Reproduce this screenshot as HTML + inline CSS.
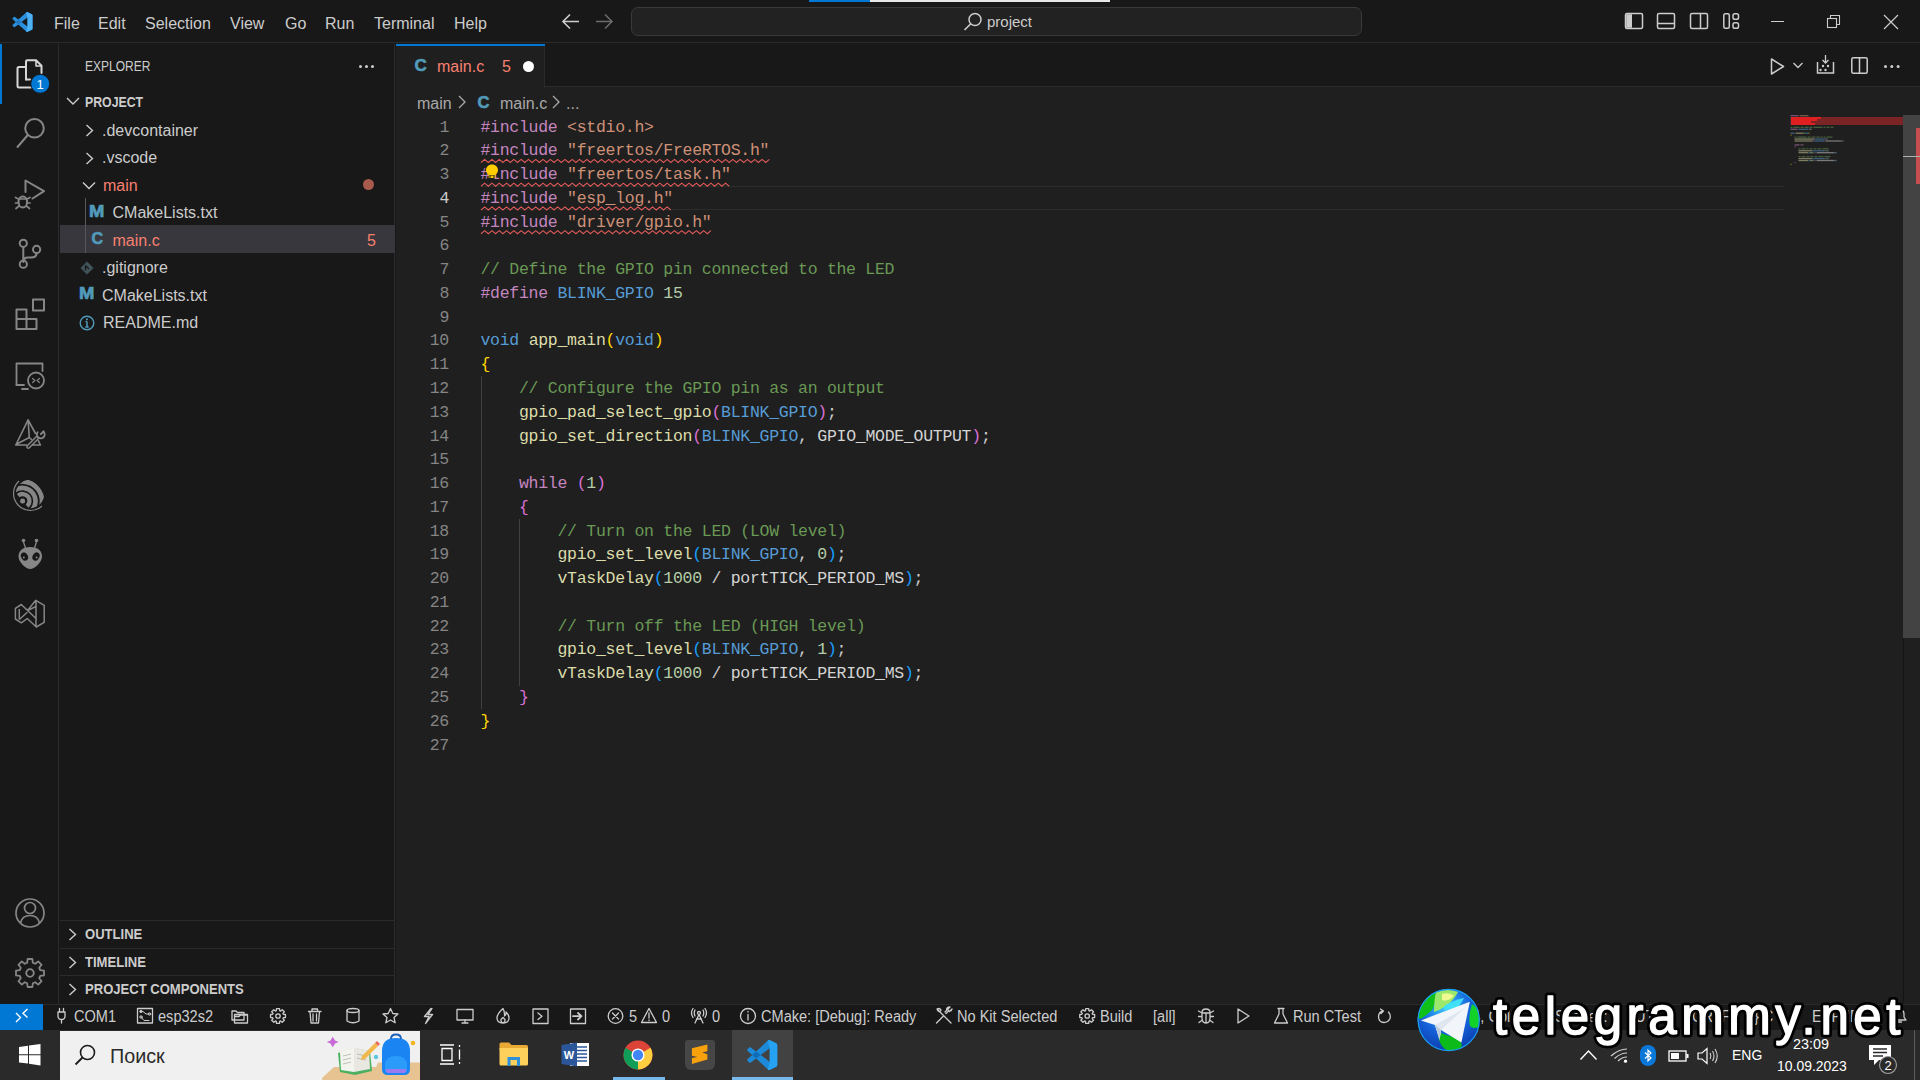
<!DOCTYPE html>
<html><head><meta charset="utf-8">
<style>
*{margin:0;padding:0;box-sizing:border-box}
html,body{width:1920px;height:1080px;overflow:hidden;background:#181818;font-family:"Liberation Sans",sans-serif;color:#cccccc}
.abs{position:absolute}
#title{left:0;top:0;width:1920px;height:43px;background:#181818;border-bottom:1px solid #2b2b2b}
.menu{position:absolute;top:15px;font-size:16px;color:#cccccc}
#act{left:0;top:44px;width:59px;height:960px;background:#181818;border-right:1px solid #2b2b2b}
#side{left:60px;top:44px;width:335px;height:960px;background:#181818;border-right:1px solid #2b2b2b}
#tabs{left:396px;top:44px;width:1524px;height:43px;background:#181818;border-bottom:1px solid #2b2b2b}
#editor{left:396px;top:87px;width:1524px;height:917px;background:#1f1f1f}
#status{left:0;top:1004px;width:1920px;height:26px;background:#181818;border-top:1px solid #2b2b2b}
#taskbar{left:0;top:1030px;width:1920px;height:50px;background:#2a2a2a}
.code{position:absolute;left:480.5px;top:115.6px;font-family:"Liberation Mono",monospace;font-size:16.5px;letter-spacing:-0.28px;white-space:pre;line-height:23.77px;color:#cccccc}
.ln{position:absolute;left:400px;top:115.6px;width:49px;white-space:pre;text-align:right;font-family:"Liberation Mono",monospace;font-size:16.5px;letter-spacing:-0.28px;line-height:23.77px;color:#858585}
.kw{color:#c586c0}.sg{color:#ce9178}.cm{color:#6a9955}.bl{color:#569cd6}.nu{color:#b5cea8}.fn{color:#dcdcaa}
.b1{color:#ffd700}.b2{color:#da70d6}.b3{color:#179fff}.wt{color:#d4d4d4}
.row{position:absolute;left:0;width:400px;height:27.5px}
.row span{position:absolute;top:5.5px;font-size:16px;color:#cccccc;white-space:nowrap}
.row span.ic{top:4px}
.sec{position:absolute;left:0;width:400px;height:27px}
.sec span{position:absolute;top:5px;font-size:14.5px;font-weight:bold;color:#cccccc;white-space:nowrap;transform:scaleX(0.9);transform-origin:0 0}
.st{position:absolute;top:1008px;font-size:16px;color:#cccccc;white-space:nowrap;transform:scaleX(0.91);transform-origin:0 0}
</style></head><body>
<div id="title" class="abs"></div>
<div id="act" class="abs"></div>
<div id="side" class="abs"></div>
<div id="prog1" class="abs" style="left:809px;top:0;width:61px;height:1.5px;background:#0078d4"></div>
<div id="prog2" class="abs" style="left:870px;top:0;width:240px;height:1.5px;background:#e8e8e8"></div>
<svg class="abs" style="left:11.5px;top:11.5px" width="21" height="20" viewBox="0 0 100 100"><path d="M96.46 10.8 L75.86 0.87 C73.48 -0.28 70.63 0.2 68.76 2.07 L29.35 38.04 L12.19 25.01 C10.59 23.8 8.36 23.9 6.88 25.25 L1.37 30.26 C-0.45 31.92 -0.45 34.78 1.36 36.43 L16.25 50 L1.36 63.58 C-0.45 65.23 -0.45 68.09 1.37 69.75 L6.88 74.76 C8.36 76.1 10.59 76.2 12.19 74.99 L29.35 61.96 L68.76 97.93 C70.63 99.8 73.48 100.28 75.86 99.13 L96.46 89.21 C98.62 88.17 100 85.98 100 83.58 V16.42 C100 14.02 98.62 11.83 96.46 10.8 Z M75.01 72.7 L45.1 50 L75.01 27.3 Z" fill="#2a8fdc" fill-rule="evenodd"/><path d="M96.46 10.8 L75.86 0.87 C73.48 -0.28 70.63 0.2 68.76 2.07 L75.01 27.3 V72.7 L68.76 97.93 C70.63 99.8 73.48 100.28 75.86 99.13 L96.46 89.21 C98.62 88.17 100 85.98 100 83.58 V16.42 C100 14.02 98.62 11.83 96.46 10.8 Z" fill="#4cb1f5"/><path d="M29.35 38.04 L45.1 50 L29.35 61.96 L16.25 50 Z" fill="#1f78c0"/></svg>
<div class="menu" style="left:54px">File</div>
<div class="menu" style="left:98px">Edit</div>
<div class="menu" style="left:145px">Selection</div>
<div class="menu" style="left:230px">View</div>
<div class="menu" style="left:285px">Go</div>
<div class="menu" style="left:325px">Run</div>
<div class="menu" style="left:374px">Terminal</div>
<div class="menu" style="left:454px">Help</div>
<svg class="abs" style="left:561px;top:13px" width="20" height="17" viewBox="0 0 20 17"><path d="M2 8.5 H18 M9 1.5 L2 8.5 L9 15.5" stroke="#cccccc" stroke-width="1.6" fill="none"/></svg>
<svg class="abs" style="left:594px;top:13px" width="20" height="17" viewBox="0 0 20 17"><path d="M2 8.5 H18 M11 1.5 L18 8.5 L11 15.5" stroke="#6b6b6b" stroke-width="1.6" fill="none"/></svg>
<div class="abs" style="left:631px;top:7px;width:731px;height:29px;border:1px solid #3a3a3a;border-radius:7px;background:#222222"></div>
<svg class="abs" style="left:963px;top:12px" width="20" height="20" viewBox="0 0 20 20"><circle cx="12" cy="7.5" r="6" stroke="#cccccc" stroke-width="1.5" fill="none"/><path d="M7.8 11.7 L1.5 18" stroke="#cccccc" stroke-width="1.6"/></svg>
<div class="abs" style="left:987px;top:13px;font-size:15px;color:#cccccc">project</div>
<!-- layout icons -->
<svg class="abs" style="left:1624px;top:11px" width="20" height="20" viewBox="0 0 20 20"><rect x="1.5" y="2.5" width="17" height="15" rx="1.5" stroke="#cccccc" stroke-width="1.5" fill="none"/><path d="M2.2 3.2 H8 V16.8 H2.2 Z" fill="#cccccc"/></svg>
<svg class="abs" style="left:1656px;top:11px" width="20" height="20" viewBox="0 0 20 20"><rect x="1.5" y="2.5" width="17" height="15" rx="1.5" stroke="#cccccc" stroke-width="1.5" fill="none"/><path d="M2 12.5 H18" stroke="#cccccc" stroke-width="1.5"/></svg>
<svg class="abs" style="left:1689px;top:11px" width="20" height="20" viewBox="0 0 20 20"><rect x="1.5" y="2.5" width="17" height="15" rx="1.5" stroke="#cccccc" stroke-width="1.5" fill="none"/><path d="M11.5 3 V17" stroke="#cccccc" stroke-width="1.5"/></svg>
<svg class="abs" style="left:1722px;top:11px" width="20" height="20" viewBox="0 0 20 20"><rect x="1.8" y="2.8" width="5.5" height="14.5" rx="1.5" stroke="#cccccc" stroke-width="1.5" fill="none"/><rect x="11" y="2.8" width="5.5" height="5.5" rx="1.8" stroke="#cccccc" stroke-width="1.5" fill="none"/><rect x="11" y="11.8" width="5.5" height="5.5" rx="1.8" stroke="#cccccc" stroke-width="1.5" fill="none"/></svg>
<!-- window controls -->
<div class="abs" style="left:1771px;top:21px;width:13px;height:1px;background:#cccccc"></div>
<svg class="abs" style="left:1826px;top:14px" width="15" height="15" viewBox="0 0 15 15"><rect x="1.5" y="4.5" width="9" height="9" stroke="#cccccc" stroke-width="1.1" fill="none"/><path d="M4.5 4.5 V1.5 H13.5 V10.5 H10.5" stroke="#cccccc" stroke-width="1.1" fill="none"/></svg>
<svg class="abs" style="left:1883px;top:14px" width="16" height="16" viewBox="0 0 16 16"><path d="M1 1 L15 15 M15 1 L1 15" stroke="#cccccc" stroke-width="1.2"/></svg>
<div class="abs" style="left:0;top:44px;width:2px;height:60px;background:#0078d4"></div>
<svg class="abs" style="left:0;top:0" width="60" height="1004" viewBox="0 0 60 1004">
<g fill="none" stroke="#868686" stroke-width="2" stroke-linejoin="round" stroke-linecap="round">
<!-- explorer -->
<path d="M25.5 67 H19 Q17.5 67 17.5 68.5 V86 Q17.5 87.5 19 87.5 H31" stroke="#d7d7d7"/>
<path d="M26 79.5 V61.5 Q26 60.3 27.3 60.3 H36 L41.5 65.8 V73" stroke="#d7d7d7"/>
<path d="M36 60.5 V66 H41.3" stroke="#d7d7d7" stroke-width="1.6"/>
<path d="M26 79.5 H30" stroke="#d7d7d7"/>
<!-- search -->
<circle cx="34.5" cy="128.3" r="9.3"/>
<path d="M27.8 135 L17.5 147"/>
<!-- debug -->
<path d="M25.5 192 V180.5 L44 191.2 L32.5 198.5"/>
<ellipse cx="22.8" cy="202" rx="4.3" ry="5.5"/>
<path d="M18.5 199 H27 M15.5 197.5 L18.5 199 M30 197.5 L27 199 M15.5 203 H18.5 M27 203 H30 M16 208.5 L19 206 M29.5 208.5 L26.5 206" stroke-width="1.7"/>
<!-- git -->
<circle cx="23.3" cy="243.3" r="3.6"/>
<circle cx="36.6" cy="249.4" r="3.6"/>
<circle cx="23.3" cy="264.2" r="3.6"/>
<path d="M23.3 247 V260.6 M36.6 253 Q36.6 257.5 31 257.5 H28 Q23.3 257.5 23.3 262"/>
<!-- extensions -->
<path d="M16.5 309.5 H26.5 V329 H16.5 Z M16.5 319 H36.5 V329 H26.5 M33 299.5 H44 V310.5 H33 Z"/>
<!-- remote -->
<path d="M16.5 385 V363.5 H42.5 V371" stroke-width="1.8"/>
<path d="M16.5 385 H24 M22 389 H28" stroke-width="1.8"/>
<circle cx="36" cy="380.5" r="8" stroke-width="1.8"/>
<path d="M32.5 378.5 L35 380.5 L32.5 382.5 M39.5 378.5 L37 380.5 L39.5 382.5" stroke-width="1.2"/>
<!-- cmake -->
<path d="M28.1 419.8 L15.8 445 H26.5 M28.1 419.8 L35.5 433.5 M38.3 440.5 L40.4 445 H31.5 M28.1 419.8 L29.3 437.5 M16.8 444 L29.3 437.5 L31.5 439.5" stroke-width="1.6"/>
<path d="M37 438 L28.3 446.7" stroke-width="4.4"/>
<path d="M37 438 L28.3 446.7" stroke="#181818" stroke-width="1.4"/>
<path d="M43.3 431.5 A3.9 3.9 0 1 1 37.6 432.2" stroke-width="1.9"/>
<path d="M40.8 434.2 L43.5 431.5" stroke-width="1.9"/>
</g>
<!-- esp -->
<defs><clipPath id="espc"><circle cx="30" cy="494" r="14.2"/></clipPath></defs>
<g clip-path="url(#espc)" fill="none" stroke="#868686"><path d="M18.16 495.61 A6.9 6.9 0 0 1 27.04 506.19" stroke-width="4.3"/><path d="M14.12 490.79 A13.2 13.2 0 0 1 31.08 511.01" stroke-width="4.6"/><path d="M10.00 485.89 A19.6 19.6 0 0 1 35.20 515.91" stroke-width="4.6"/></g><circle cx="22.6" cy="500.9" r="2.5" fill="#868686"/><path d="M19 481 A15.2 15.2 0 0 0 42 506" fill="none" stroke="#868686" stroke-width="1.2"/>
<g fill="#868686">
<!-- platformio -->
<path d="M30.2 547 C38 547 42 551 42 556.5 C42 562 35 569 30.2 569 C25.5 569 18.5 562 18.5 556.5 C18.5 551 22.5 547 30.2 547 Z"/>
<circle cx="23.5" cy="540.5" r="1.8"/><circle cx="36.5" cy="540.5" r="1.8"/>
<path d="M23.2 541 L25.5 548 M36.8 541 L34.5 548" stroke="#868686" stroke-width="1.3"/>
<ellipse cx="24.5" cy="556.5" rx="3.3" ry="4.3" fill="#181818" transform="rotate(-30 24.5 556.5)"/>
<ellipse cx="36" cy="556.5" rx="3.3" ry="4.3" fill="#181818" transform="rotate(30 36 556.5)"/>
<circle cx="23.8" cy="557.5" r="1" fill="#868686"/><circle cx="36.6" cy="557.5" r="1" fill="#868686"/>
</g>
<g fill="none" stroke="#868686" stroke-width="1.7" stroke-linejoin="round">
<!-- vs -->
<path d="M15.4 608.3 L21.3 604.5 L27.5 610.5 L35.8 600.3 L44.2 605.3 V622.4 L36.3 627 L27.3 618.5 L21.3 622.8 L15.4 619 Z M36 600.5 V627 M21.3 604.5 L36 618.5 M19.3 609 V619.5 M19.3 619.5 L27.3 612.3 M27.5 610.5 L36 606.5" stroke-width="1.5"/>
<!-- account -->
<circle cx="30" cy="913" r="14"/>
<circle cx="30" cy="908" r="5.5"/>
<path d="M20.5 923 Q22 915.5 30 915.5 Q38 915.5 39.5 923"/>
</g>
<!-- settings gear -->
<g transform="translate(30 973)" fill="none" stroke="#868686" stroke-width="1.8" stroke-linejoin="round"><path d="M-2.83 -10.22 L-2.40 -14.00 L2.40 -14.00 L2.83 -10.22 L5.22 -9.22 L8.20 -11.59 L11.59 -8.20 L9.22 -5.22 L10.22 -2.83 L14.00 -2.40 L14.00 2.40 L10.22 2.83 L9.22 5.22 L11.59 8.20 L8.20 11.59 L5.22 9.22 L2.83 10.22 L2.40 14.00 L-2.40 14.00 L-2.83 10.22 L-5.22 9.22 L-8.20 11.59 L-11.59 8.20 L-9.22 5.22 L-10.22 2.83 L-14.00 2.40 L-14.00 -2.40 L-10.22 -2.83 L-9.22 -5.22 L-11.59 -8.20 L-8.20 -11.59 L-5.22 -9.22 Z"/><circle cx="0" cy="0" r="3.8"/></g>
<!-- badge -->
<circle cx="40.2" cy="83.8" r="9.5" fill="#0078d4" stroke="#181818" stroke-width="1"/>
<text x="40.2" y="89" text-anchor="middle" font-family="Liberation Sans" font-size="13" fill="#ffffff">1</text>
</svg>

<div class="abs" style="left:85px;top:57px;font-size:15px;color:#cccccc;transform:scaleX(0.8);transform-origin:0 0">EXPLORER</div>
<div class="abs" style="left:359px;top:65px;width:3px;height:3px;background:#cccccc;border-radius:50%;box-shadow:6px 0 #cccccc,12px 0 #cccccc"></div>
<svg class="abs" style="left:66px;top:96px" width="14" height="10" viewBox="0 0 14 10"><path d="M1 2 L7 8 L13 2" stroke="#cccccc" stroke-width="1.4" fill="none"/></svg>
<div class="abs" style="left:85px;top:93px;font-size:15px;font-weight:bold;color:#cccccc;transform:scaleX(0.82);transform-origin:0 0">PROJECT</div>
<div class="abs" style="left:60px;top:225px;width:335px;height:28px;background:#37373d"></div>
<div class="abs" style="left:85px;top:198px;width:1px;height:55px;background:#585858"></div>
<div class="row" style="top:116px"><svg class="abs" style="left:85px;top:8px" width="9" height="13" viewBox="0 0 9 13"><path d="M1.5 1 L7.5 6.5 L1.5 12" stroke="#cccccc" stroke-width="1.4" fill="none"/></svg><span style="left:102px">.devcontainer</span></div>
<div class="row" style="top:143.5px"><svg class="abs" style="left:85px;top:8px" width="9" height="13" viewBox="0 0 9 13"><path d="M1.5 1 L7.5 6.5 L1.5 12" stroke="#cccccc" stroke-width="1.4" fill="none"/></svg><span style="left:102px">.vscode</span></div>
<div class="row" style="top:171px"><svg class="abs" style="left:82px;top:10px" width="14" height="9" viewBox="0 0 14 9"><path d="M1 1.5 L7 7.5 L13 1.5" stroke="#cccccc" stroke-width="1.4" fill="none"/></svg><span style="left:103px;color:#f88070">main</span><div class="abs" style="left:363px;top:8px;width:11px;height:11px;border-radius:50%;background:#a85a4c"></div></div>
<div class="row" style="top:198.5px"><span class="ic" style="left:89px;color:#519aba;font-weight:bold;font-size:16px;top:4px;transform:scaleX(1.15);transform-origin:0 0;-webkit-text-stroke:0.7px #519aba">M</span><span style="left:112.5px">CMakeLists.txt</span></div>
<div class="row" style="top:226px"><span class="ic" style="left:91.5px;color:#519aba;font-weight:bold;font-size:16px;top:4px;-webkit-text-stroke:0.6px #519aba">C</span><span style="left:112.5px;color:#f88070">main.c</span><span style="left:367px;color:#f88070">5</span></div>
<div class="row" style="top:253.5px"><svg class="abs" style="left:80px;top:7px" width="14" height="14" viewBox="0 0 14 14"><path d="M7 0.5 L13.5 7 L7 13.5 L0.5 7 Z" fill="#41535b"/><path d="M5.5 4.5 L9 8 M5.5 4.5 V9.5 M9 8" stroke="#181818" stroke-width="1.2"/></svg><span style="left:102px">.gitignore</span></div>
<div class="row" style="top:281px"><span class="ic" style="left:79px;color:#519aba;font-weight:bold;font-size:16px;top:4px;transform:scaleX(1.15);transform-origin:0 0;-webkit-text-stroke:0.7px #519aba">M</span><span style="left:102px">CMakeLists.txt</span></div>
<div class="row" style="top:308.5px"><svg class="abs" style="left:79px;top:6px" width="16" height="16" viewBox="0 0 16 16"><circle cx="8" cy="8" r="6.8" stroke="#519aba" stroke-width="1.4" fill="none"/><path d="M8 6.5 V12 M6.3 12 H9.7 M6.5 6.5 H8" stroke="#519aba" stroke-width="1.5"/><circle cx="8" cy="4.3" r="1" fill="#519aba"/></svg><span style="left:103px">README.md</span></div>
<!-- bottom panels -->
<div class="abs" style="left:60px;top:920px;width:335px;height:1px;background:#2b2b2b"></div>
<div class="abs" style="left:60px;top:948px;width:335px;height:1px;background:#2b2b2b"></div>
<div class="abs" style="left:60px;top:975px;width:335px;height:1px;background:#2b2b2b"></div>
<div class="sec" style="top:921px"><svg class="abs" style="left:68px;top:7px" width="9" height="13" viewBox="0 0 9 13"><path d="M1.5 1 L7.5 6.5 L1.5 12" stroke="#cccccc" stroke-width="1.4" fill="none"/></svg><span style="left:85px">OUTLINE</span></div>
<div class="sec" style="top:949px"><svg class="abs" style="left:68px;top:7px" width="9" height="13" viewBox="0 0 9 13"><path d="M1.5 1 L7.5 6.5 L1.5 12" stroke="#cccccc" stroke-width="1.4" fill="none"/></svg><span style="left:85px">TIMELINE</span></div>
<div class="sec" style="top:976px"><svg class="abs" style="left:68px;top:7px" width="9" height="13" viewBox="0 0 9 13"><path d="M1.5 1 L7.5 6.5 L1.5 12" stroke="#cccccc" stroke-width="1.4" fill="none"/></svg><span style="left:85px">PROJECT COMPONENTS</span></div>
<div id="tabs" class="abs"></div>
<div id="editor" class="abs"></div>
<div class="abs" style="left:396px;top:44px;width:149px;height:44px;background:#1f1f1f;border-right:1px solid #2b2b2b"></div>
<div class="abs" style="left:396px;top:44px;width:149px;height:1.5px;background:#0078d4"></div>
<div class="abs" style="left:414.5px;top:56px;font-size:17px;font-weight:bold;color:#519aba;-webkit-text-stroke:0.6px #519aba">C</div>
<div class="abs" style="left:437px;top:58px;font-size:16px;color:#f88070">main.c</div>
<div class="abs" style="left:502px;top:58px;font-size:16px;color:#f88070">5</div>
<div class="abs" style="left:522.5px;top:60.8px;width:11px;height:11px;border-radius:50%;background:#ffffff"></div>
<!-- breadcrumbs -->
<div class="abs" style="left:417px;top:94.5px;font-size:16px;color:#a9a9a9">main</div>
<svg class="abs" style="left:457px;top:95px" width="10" height="14" viewBox="0 0 10 14"><path d="M2 1 L8 7 L2 13" stroke="#a9a9a9" stroke-width="1.3" fill="none"/></svg>
<div class="abs" style="left:477.5px;top:92.5px;font-size:16.5px;font-weight:bold;color:#519aba;-webkit-text-stroke:0.6px #519aba">C</div>
<div class="abs" style="left:500px;top:94.5px;font-size:16px;color:#a9a9a9">main.c</div>
<svg class="abs" style="left:551px;top:95px" width="10" height="14" viewBox="0 0 10 14"><path d="M2 1 L8 7 L2 13" stroke="#a9a9a9" stroke-width="1.3" fill="none"/></svg>
<div class="abs" style="left:566px;top:94.5px;font-size:16px;color:#a9a9a9">...</div>
<!-- editor actions -->
<svg class="abs" style="left:1770px;top:57px" width="16" height="19" viewBox="0 0 16 19"><path d="M1.5 2 L13.5 9.5 L1.5 17 Z" stroke="#cccccc" stroke-width="1.5" fill="none" stroke-linejoin="round"/></svg>
<svg class="abs" style="left:1792px;top:61px" width="12" height="9" viewBox="0 0 12 9"><path d="M1.5 2 L6 6.5 L10.5 2" stroke="#cccccc" stroke-width="1.3" fill="none"/></svg>
<svg class="abs" style="left:1816px;top:54px" width="19" height="21" viewBox="0 0 19 21"><path d="M1.5 8 V19 H17.5 V8" stroke="#cccccc" stroke-width="1.5" fill="none"/><path d="M9.5 1 V9 M6.5 6 L9.5 9 L12.5 6" stroke="#cccccc" stroke-width="1.3" fill="none"/><circle cx="7" cy="12" r="1.2" fill="#cccccc"/><circle cx="12" cy="12" r="1.2" fill="#cccccc"/><circle cx="4.5" cy="16" r="1.2" fill="#cccccc"/><circle cx="9.5" cy="16" r="1.2" fill="#cccccc"/></svg>
<svg class="abs" style="left:1850px;top:56px" width="19" height="19" viewBox="0 0 19 19"><rect x="1.8" y="1.8" width="15.4" height="15.4" rx="1.5" stroke="#cccccc" stroke-width="1.5" fill="none"/><path d="M9.5 2 V17" stroke="#cccccc" stroke-width="1.5"/></svg>
<div class="abs" style="left:1883.5px;top:64.5px;width:3px;height:3px;background:#cccccc;border-radius:50%;box-shadow:6.3px 0 #cccccc,12.6px 0 #cccccc"></div>
<!-- current line -->
<div class="abs" style="left:481px;top:186px;width:1303px;height:24px;border-top:1px solid #2c2c2c;border-bottom:1px solid #2c2c2c"></div>
<!-- indent guides -->
<div class="abs" style="left:481px;top:376px;width:1px;height:333px;background:#404040"></div>
<div class="abs" style="left:519px;top:519px;width:1px;height:167px;background:#404040"></div>
<!-- squiggles -->
<svg class="abs" style="left:0;top:0" width="1920" height="1004"><path d="M481.00 162.47 L484.65 159.37 L488.30 162.47 L491.95 159.37 L495.60 162.47 L499.25 159.37 L502.90 162.47 L506.55 159.37 L510.20 162.47 L513.85 159.37 L517.50 162.47 L521.15 159.37 L524.80 162.47 L528.45 159.37 L532.10 162.47 L535.75 159.37 L539.40 162.47 L543.05 159.37 L546.70 162.47 L550.35 159.37 L554.00 162.47 L557.65 159.37 L561.30 162.47 L564.95 159.37 L568.60 162.47 L572.25 159.37 L575.90 162.47 L579.55 159.37 L583.20 162.47 L586.85 159.37 L590.50 162.47 L594.15 159.37 L597.80 162.47 L601.45 159.37 L605.10 162.47 L608.75 159.37 L612.40 162.47 L616.05 159.37 L619.70 162.47 L623.35 159.37 L627.00 162.47 L630.65 159.37 L634.30 162.47 L637.95 159.37 L641.60 162.47 L645.25 159.37 L648.90 162.47 L652.55 159.37 L656.20 162.47 L659.85 159.37 L663.50 162.47 L667.15 159.37 L670.80 162.47 L674.45 159.37 L678.10 162.47 L681.75 159.37 L685.40 162.47 L689.05 159.37 L692.70 162.47 L696.35 159.37 L700.00 162.47 L703.65 159.37 L707.30 162.47 L710.95 159.37 L714.60 162.47 L718.25 159.37 L721.90 162.47 L725.55 159.37 L729.20 162.47 L732.85 159.37 L736.50 162.47 L740.15 159.37 L743.80 162.47 L747.45 159.37 L751.10 162.47 L754.75 159.37 L758.40 162.47 L762.05 159.37 L765.70 162.47 L769.35 159.37 M481.00 186.24 L484.65 183.14 L488.30 186.24 L491.95 183.14 L495.60 186.24 L499.25 183.14 L502.90 186.24 L506.55 183.14 L510.20 186.24 L513.85 183.14 L517.50 186.24 L521.15 183.14 L524.80 186.24 L528.45 183.14 L532.10 186.24 L535.75 183.14 L539.40 186.24 L543.05 183.14 L546.70 186.24 L550.35 183.14 L554.00 186.24 L557.65 183.14 L561.30 186.24 L564.95 183.14 L568.60 186.24 L572.25 183.14 L575.90 186.24 L579.55 183.14 L583.20 186.24 L586.85 183.14 L590.50 186.24 L594.15 183.14 L597.80 186.24 L601.45 183.14 L605.10 186.24 L608.75 183.14 L612.40 186.24 L616.05 183.14 L619.70 186.24 L623.35 183.14 L627.00 186.24 L630.65 183.14 L634.30 186.24 L637.95 183.14 L641.60 186.24 L645.25 183.14 L648.90 186.24 L652.55 183.14 L656.20 186.24 L659.85 183.14 L663.50 186.24 L667.15 183.14 L670.80 186.24 L674.45 183.14 L678.10 186.24 L681.75 183.14 L685.40 186.24 L689.05 183.14 L692.70 186.24 L696.35 183.14 L700.00 186.24 L703.65 183.14 L707.30 186.24 L710.95 183.14 L714.60 186.24 L718.25 183.14 L721.90 186.24 L725.55 183.14 L729.20 186.24 M481.00 210.01 L484.65 206.91 L488.30 210.01 L491.95 206.91 L495.60 210.01 L499.25 206.91 L502.90 210.01 L506.55 206.91 L510.20 210.01 L513.85 206.91 L517.50 210.01 L521.15 206.91 L524.80 210.01 L528.45 206.91 L532.10 210.01 L535.75 206.91 L539.40 210.01 L543.05 206.91 L546.70 210.01 L550.35 206.91 L554.00 210.01 L557.65 206.91 L561.30 210.01 L564.95 206.91 L568.60 210.01 L572.25 206.91 L575.90 210.01 L579.55 206.91 L583.20 210.01 L586.85 206.91 L590.50 210.01 L594.15 206.91 L597.80 210.01 L601.45 206.91 L605.10 210.01 L608.75 206.91 L612.40 210.01 L616.05 206.91 L619.70 210.01 L623.35 206.91 L627.00 210.01 L630.65 206.91 L634.30 210.01 L637.95 206.91 L641.60 210.01 L645.25 206.91 L648.90 210.01 L652.55 206.91 L656.20 210.01 L659.85 206.91 L663.50 210.01 L667.15 206.91 L670.80 210.01 M481.00 233.78 L484.65 230.68 L488.30 233.78 L491.95 230.68 L495.60 233.78 L499.25 230.68 L502.90 233.78 L506.55 230.68 L510.20 233.78 L513.85 230.68 L517.50 233.78 L521.15 230.68 L524.80 233.78 L528.45 230.68 L532.10 233.78 L535.75 230.68 L539.40 233.78 L543.05 230.68 L546.70 233.78 L550.35 230.68 L554.00 233.78 L557.65 230.68 L561.30 233.78 L564.95 230.68 L568.60 233.78 L572.25 230.68 L575.90 233.78 L579.55 230.68 L583.20 233.78 L586.85 230.68 L590.50 233.78 L594.15 230.68 L597.80 233.78 L601.45 230.68 L605.10 233.78 L608.75 230.68 L612.40 233.78 L616.05 230.68 L619.70 233.78 L623.35 230.68 L627.00 233.78 L630.65 230.68 L634.30 233.78 L637.95 230.68 L641.60 233.78 L645.25 230.68 L648.90 233.78 L652.55 230.68 L656.20 233.78 L659.85 230.68 L663.50 233.78 L667.15 230.68 L670.80 233.78 L674.45 230.68 L678.10 233.78 L681.75 230.68 L685.40 233.78 L689.05 230.68 L692.70 233.78 L696.35 230.68 L700.00 233.78 L703.65 230.68 L707.30 233.78 L710.95 230.68" stroke="#e05a5a" stroke-width="1.1" fill="none"/></svg>
<!-- minimap -->
<svg id="minisvg" class="abs" style="left:0;top:0;opacity:0.5" width="1920" height="1004"><rect x="1790.5" y="115.00" width="8" height="1.3" fill="#c586c0"/><rect x="1799.5" y="115.00" width="9" height="1.3" fill="#ce9178"/><rect x="1790.5" y="116.95" width="8" height="1.3" fill="#c586c0"/><rect x="1799.5" y="116.95" width="21" height="1.3" fill="#ce9178"/><rect x="1790.5" y="118.90" width="8" height="1.3" fill="#c586c0"/><rect x="1799.5" y="118.90" width="17" height="1.3" fill="#ce9178"/><rect x="1790.5" y="120.85" width="8" height="1.3" fill="#c586c0"/><rect x="1799.5" y="120.85" width="11" height="1.3" fill="#ce9178"/><rect x="1790.5" y="122.80" width="8" height="1.3" fill="#c586c0"/><rect x="1799.5" y="122.80" width="15" height="1.3" fill="#ce9178"/><rect x="1790.5" y="126.70" width="2" height="1.3" fill="#6a9955"/><rect x="1793.5" y="126.70" width="6" height="1.3" fill="#6a9955"/><rect x="1800.5" y="126.70" width="3" height="1.3" fill="#6a9955"/><rect x="1804.5" y="126.70" width="4" height="1.3" fill="#6a9955"/><rect x="1809.5" y="126.70" width="3" height="1.3" fill="#6a9955"/><rect x="1813.5" y="126.70" width="9" height="1.3" fill="#6a9955"/><rect x="1823.5" y="126.70" width="2" height="1.3" fill="#6a9955"/><rect x="1826.5" y="126.70" width="3" height="1.3" fill="#6a9955"/><rect x="1830.5" y="126.70" width="3" height="1.3" fill="#6a9955"/><rect x="1790.5" y="128.65" width="7" height="1.3" fill="#c586c0"/><rect x="1798.5" y="128.65" width="10" height="1.3" fill="#569cd6"/><rect x="1809.5" y="128.65" width="2" height="1.3" fill="#b5cea8"/><rect x="1790.5" y="132.55" width="4" height="1.3" fill="#569cd6"/><rect x="1795.5" y="132.55" width="8" height="1.3" fill="#dcdcaa"/><rect x="1803.5" y="132.55" width="1" height="1.3" fill="#ffd700"/><rect x="1804.5" y="132.55" width="4" height="1.3" fill="#569cd6"/><rect x="1808.5" y="132.55" width="1" height="1.3" fill="#ffd700"/><rect x="1790.5" y="134.50" width="1" height="1.3" fill="#ffd700"/><rect x="1794.5" y="136.45" width="2" height="1.3" fill="#6a9955"/><rect x="1797.5" y="136.45" width="9" height="1.3" fill="#6a9955"/><rect x="1807.5" y="136.45" width="3" height="1.3" fill="#6a9955"/><rect x="1811.5" y="136.45" width="4" height="1.3" fill="#6a9955"/><rect x="1816.5" y="136.45" width="3" height="1.3" fill="#6a9955"/><rect x="1820.5" y="136.45" width="2" height="1.3" fill="#6a9955"/><rect x="1823.5" y="136.45" width="2" height="1.3" fill="#6a9955"/><rect x="1826.5" y="136.45" width="6" height="1.3" fill="#6a9955"/><rect x="1794.5" y="138.40" width="20" height="1.3" fill="#dcdcaa"/><rect x="1814.5" y="138.40" width="1" height="1.3" fill="#da70d6"/><rect x="1815.5" y="138.40" width="10" height="1.3" fill="#569cd6"/><rect x="1825.5" y="138.40" width="1" height="1.3" fill="#da70d6"/><rect x="1826.5" y="138.40" width="1" height="1.3" fill="#cccccc"/><rect x="1794.5" y="140.35" width="18" height="1.3" fill="#dcdcaa"/><rect x="1812.5" y="140.35" width="1" height="1.3" fill="#da70d6"/><rect x="1813.5" y="140.35" width="10" height="1.3" fill="#569cd6"/><rect x="1823.5" y="140.35" width="1" height="1.3" fill="#cccccc"/><rect x="1825.5" y="140.35" width="16" height="1.3" fill="#d4d4d4"/><rect x="1841.5" y="140.35" width="1" height="1.3" fill="#da70d6"/><rect x="1842.5" y="140.35" width="1" height="1.3" fill="#cccccc"/><rect x="1794.5" y="144.25" width="5" height="1.3" fill="#c586c0"/><rect x="1800.5" y="144.25" width="1" height="1.3" fill="#da70d6"/><rect x="1801.5" y="144.25" width="1" height="1.3" fill="#b5cea8"/><rect x="1802.5" y="144.25" width="1" height="1.3" fill="#da70d6"/><rect x="1794.5" y="146.20" width="1" height="1.3" fill="#da70d6"/><rect x="1798.5" y="148.15" width="2" height="1.3" fill="#6a9955"/><rect x="1801.5" y="148.15" width="4" height="1.3" fill="#6a9955"/><rect x="1806.5" y="148.15" width="2" height="1.3" fill="#6a9955"/><rect x="1809.5" y="148.15" width="3" height="1.3" fill="#6a9955"/><rect x="1813.5" y="148.15" width="3" height="1.3" fill="#6a9955"/><rect x="1817.5" y="148.15" width="4" height="1.3" fill="#6a9955"/><rect x="1822.5" y="148.15" width="6" height="1.3" fill="#6a9955"/><rect x="1798.5" y="150.10" width="14" height="1.3" fill="#dcdcaa"/><rect x="1812.5" y="150.10" width="1" height="1.3" fill="#179fff"/><rect x="1813.5" y="150.10" width="10" height="1.3" fill="#569cd6"/><rect x="1823.5" y="150.10" width="1" height="1.3" fill="#cccccc"/><rect x="1825.5" y="150.10" width="1" height="1.3" fill="#b5cea8"/><rect x="1826.5" y="150.10" width="1" height="1.3" fill="#179fff"/><rect x="1827.5" y="150.10" width="1" height="1.3" fill="#cccccc"/><rect x="1798.5" y="152.05" width="10" height="1.3" fill="#dcdcaa"/><rect x="1808.5" y="152.05" width="1" height="1.3" fill="#179fff"/><rect x="1809.5" y="152.05" width="4" height="1.3" fill="#b5cea8"/><rect x="1814.5" y="152.05" width="1" height="1.3" fill="#cccccc"/><rect x="1816.5" y="152.05" width="18" height="1.3" fill="#d4d4d4"/><rect x="1834.5" y="152.05" width="1" height="1.3" fill="#179fff"/><rect x="1835.5" y="152.05" width="1" height="1.3" fill="#cccccc"/><rect x="1798.5" y="155.95" width="2" height="1.3" fill="#6a9955"/><rect x="1801.5" y="155.95" width="4" height="1.3" fill="#6a9955"/><rect x="1806.5" y="155.95" width="3" height="1.3" fill="#6a9955"/><rect x="1810.5" y="155.95" width="3" height="1.3" fill="#6a9955"/><rect x="1814.5" y="155.95" width="3" height="1.3" fill="#6a9955"/><rect x="1818.5" y="155.95" width="5" height="1.3" fill="#6a9955"/><rect x="1824.5" y="155.95" width="6" height="1.3" fill="#6a9955"/><rect x="1798.5" y="157.90" width="14" height="1.3" fill="#dcdcaa"/><rect x="1812.5" y="157.90" width="1" height="1.3" fill="#179fff"/><rect x="1813.5" y="157.90" width="10" height="1.3" fill="#569cd6"/><rect x="1823.5" y="157.90" width="1" height="1.3" fill="#cccccc"/><rect x="1825.5" y="157.90" width="1" height="1.3" fill="#b5cea8"/><rect x="1826.5" y="157.90" width="1" height="1.3" fill="#179fff"/><rect x="1827.5" y="157.90" width="1" height="1.3" fill="#cccccc"/><rect x="1798.5" y="159.85" width="10" height="1.3" fill="#dcdcaa"/><rect x="1808.5" y="159.85" width="1" height="1.3" fill="#179fff"/><rect x="1809.5" y="159.85" width="4" height="1.3" fill="#b5cea8"/><rect x="1814.5" y="159.85" width="1" height="1.3" fill="#cccccc"/><rect x="1816.5" y="159.85" width="18" height="1.3" fill="#d4d4d4"/><rect x="1834.5" y="159.85" width="1" height="1.3" fill="#179fff"/><rect x="1835.5" y="159.85" width="1" height="1.3" fill="#cccccc"/><rect x="1794.5" y="161.80" width="1" height="1.3" fill="#da70d6"/><rect x="1790.5" y="163.75" width="1" height="1.3" fill="#ffd700"/></svg>
<div class="abs" style="left:1790.5px;top:116.9px;width:113px;height:7.8px;background:#7a2426"></div>
<div class="abs" style="left:1790.5px;top:116.9px;width:30px;height:2px;background:#e02020"></div>
<div class="abs" style="left:1790.5px;top:118.9px;width:26px;height:2px;background:#e02020"></div>
<div class="abs" style="left:1790.5px;top:120.8px;width:20px;height:2px;background:#e02020"></div>
<div class="abs" style="left:1790.5px;top:122.8px;width:24px;height:2px;background:#e02020"></div>

<div class="abs" style="left:1903px;top:115px;width:17px;height:523px;background:#434343"></div>
<div class="abs" style="left:1903px;top:638px;width:1px;height:366px;background:#141414"></div>
<div class="abs" style="left:1916px;top:128px;width:4px;height:56px;background:#c74e4e"></div>
<div class="abs" style="left:1903px;top:155.5px;width:17px;height:1px;background:#b0b0b0"></div>
<div class="code" id="code"><span class="kw">#include</span> <span class="sg">&lt;stdio.h&gt;</span>
<span class="kw">#include</span> <span class="sg">"freertos/FreeRTOS.h"</span>
<span class="kw">#include</span> <span class="sg">"freertos/task.h"</span>
<span class="kw">#include</span> <span class="sg">"esp_log.h"</span>
<span class="kw">#include</span> <span class="sg">"driver/gpio.h"</span>
 
<span class="cm">// Define the GPIO pin connected to the LED</span>
<span class="kw">#define</span> <span class="bl">BLINK_GPIO</span> <span class="nu">15</span>
 
<span class="bl">void</span> <span class="fn">app_main</span><span class="b1">(</span><span class="bl">void</span><span class="b1">)</span>
<span class="b1">{</span>
    <span class="cm">// Configure the GPIO pin as an output</span>
    <span class="fn">gpio_pad_select_gpio</span><span class="b2">(</span><span class="bl">BLINK_GPIO</span><span class="b2">)</span>;
    <span class="fn">gpio_set_direction</span><span class="b2">(</span><span class="bl">BLINK_GPIO</span>, <span class="wt">GPIO_MODE_OUTPUT</span><span class="b2">)</span>;
 
    <span class="kw">while</span> <span class="b2">(</span><span class="nu">1</span><span class="b2">)</span>
    <span class="b2">{</span>
        <span class="cm">// Turn on the LED (LOW level)</span>
        <span class="fn">gpio_set_level</span><span class="b3">(</span><span class="bl">BLINK_GPIO</span>, <span class="nu">0</span><span class="b3">)</span>;
        <span class="fn">vTaskDelay</span><span class="b3">(</span><span class="nu">1000</span> / <span class="wt">portTICK_PERIOD_MS</span><span class="b3">)</span>;
 
        <span class="cm">// Turn off the LED (HIGH level)</span>
        <span class="fn">gpio_set_level</span><span class="b3">(</span><span class="bl">BLINK_GPIO</span>, <span class="nu">1</span><span class="b3">)</span>;
        <span class="fn">vTaskDelay</span><span class="b3">(</span><span class="nu">1000</span> / <span class="wt">portTICK_PERIOD_MS</span><span class="b3">)</span>;
    <span class="b2">}</span>
<span class="b1">}</span>
 </div>
<!-- lightbulb -->
<svg class="abs" style="left:485px;top:164px" width="14" height="17" viewBox="0 0 14 17"><path d="M7 0.5 C10.6 0.5 13 3 13 6.2 C13 8.5 11.5 9.8 10.3 11 V14 H3.7 V11 C2.5 9.8 1 8.5 1 6.2 C1 3 3.4 0.5 7 0.5 Z" fill="#ffcc00"/><rect x="4.5" y="11" width="5" height="4" fill="#1f1f1f"/><rect x="5.5" y="11.5" width="3" height="2.5" fill="#ffcc00"/></svg>
<div class="ln" id="lnums">1
2
3
<span style="color:#cccccc">4</span>
5
6
7
8
9
10
11
12
13
14
15
16
17
18
19
20
21
22
23
24
25
26
27</div>
<div id="status" class="abs"></div>
<div class="abs" style="left:0;top:1004px;width:43px;height:26px;background:#0078d4"></div>
<svg class="abs" style="left:0;top:1004px" width="43" height="26" viewBox="0 1004 43 26"><path d="M16 1013 L20.5 1017.5 L16 1022 M27.5 1009 L23 1013.3 L27.5 1017.5" stroke="#ffffff" stroke-width="1.4" fill="none"/></svg>
<div class="st" style="left:74px">COM1</div>
<div class="st" style="left:157.5px">esp32s2</div>
<div class="st" style="left:629px">5</div>
<div class="st" style="left:662px">0</div>
<div class="st" style="left:712px">0</div>
<div class="st" style="left:761px">CMake: [Debug]: Ready</div>
<div class="st" style="left:957px">No Kit Selected</div>
<div class="st" style="left:1100px">Build</div>
<div class="st" style="left:1153px">[all]</div>
<div class="st" style="left:1293px">Run CTest</div>
<div class="st" style="left:1452px">Ln 4, Col 1</div>
<div class="st" style="left:1555px">Spaces: 4</div>
<div class="st" style="left:1635px">UTF-8</div>
<div class="st" style="left:1692px">CRLF</div>
<div class="st" style="left:1745px">{ } C</div>
<div class="st" style="left:1812px">ESP-IDF</div>
<svg class="abs" style="left:0;top:1004px" width="1920" height="26" viewBox="0 1004 1920 26">
<g fill="none" stroke="#cccccc" stroke-width="1.3" stroke-linejoin="round" stroke-linecap="round">
<!-- plug -->
<path d="M58 1012 H65 V1016 Q65 1019.5 61.5 1019.5 Q58 1019.5 58 1016 Z M59.5 1008.5 V1012 M63.5 1008.5 V1012 M61.5 1019.5 V1023"/>
<!-- board -->
<rect x="137.5" y="1008.5" width="15" height="14.5"/>
<path d="M140 1011.5 H143 L146 1014 H149.5 M141 1017 L144 1020.5 H149" stroke-width="1"/>
<circle cx="141" cy="1011.5" r="1.2" stroke-width="1"/><circle cx="149.5" cy="1014" r="1.2" stroke-width="1"/><circle cx="141" cy="1017" r="1.2" stroke-width="1"/>
<!-- folders -->
<path d="M232 1011 H236 L237.5 1012.5 H244 V1020 H232 Z M234.5 1014.5 H247.5 V1023 H234.5 Z M234.5 1016.5 H239 L240.5 1015 H247.5"/>
<!-- gear -->
<circle cx="278" cy="1016" r="2.2"/>
<path d="M276.35 1010.65 L276.49 1008.55 L279.51 1008.55 L279.65 1010.65 L280.61 1011.05 L282.20 1009.67 L284.33 1011.80 L282.95 1013.39 L283.35 1014.35 L285.45 1014.49 L285.45 1017.51 L283.35 1017.65 L282.95 1018.61 L284.33 1020.20 L282.20 1022.33 L280.61 1020.95 L279.65 1021.35 L279.51 1023.45 L276.49 1023.45 L276.35 1021.35 L275.39 1020.95 L273.80 1022.33 L271.67 1020.20 L273.05 1018.61 L272.65 1017.65 L270.55 1017.51 L270.55 1014.49 L272.65 1014.35 L273.05 1013.39 L271.67 1011.80 L273.80 1009.67 L275.39 1011.05 Z"/>
<!-- trash -->
<path d="M308.5 1011.5 H321 M312 1011.5 V1009 H317.5 V1011.5 M310 1011.5 L311 1023 H318.5 L319.5 1011.5 M313 1014 V1021 M316.5 1014 V1021"/>
<!-- cylinder -->
<ellipse cx="353" cy="1010.5" rx="6" ry="2"/>
<path d="M347 1010.5 V1021 Q353 1024.5 359 1021 V1010.5"/>
<!-- star -->
<path d="M390.5 1008.5 L392.8 1013.5 L398 1014 L394 1017.5 L395.2 1022.8 L390.5 1020 L385.8 1022.8 L387 1017.5 L383 1014 L388.2 1013.5 Z"/>
<!-- bolt -->
<path d="M431 1008.5 L424.5 1016.5 H429 L425.5 1023.5 L432.5 1014.5 H428 L432 1008.5"/>
<!-- monitor -->
<rect x="457" y="1009.5" width="16" height="10.5"/>
<path d="M462 1023 H468 M465 1020 V1023"/>
<!-- flame -->
<path d="M503 1008.5 Q497 1014 497 1018 Q497 1023 503 1023 Q509 1023 509 1018 Q509 1014.5 506 1012 Q506.5 1015 504.5 1016 Q505 1012 503 1008.5 Z M503 1023 Q500.5 1022 501 1019.5 L503 1017.5 L505 1019.5 Q505.5 1022 503 1023"/>
<!-- terminal box -->
<rect x="533" y="1009" width="15" height="14.5"/>
<path d="M538 1013 L542 1016.2 L538 1019.5"/>
<!-- arrow box -->
<rect x="570.5" y="1009" width="15" height="14.5"/>
<path d="M573 1016.2 H581 M578 1013 L581.5 1016.2 L578 1019.5" stroke-width="1.8"/>
<!-- error -->
<circle cx="615.5" cy="1016" r="7.3"/>
<path d="M612.5 1013 L618.5 1019 M618.5 1013 L612.5 1019"/>
<!-- warning -->
<path d="M649 1008.5 L656.5 1022.5 H641.5 Z M649 1013 V1018 M649 1020 V1020.5"/>
<!-- broadcast -->
<circle cx="699" cy="1013" r="1.5"/>
<path d="M699 1014.5 L695 1023 M699 1014.5 L703 1023 M696.5 1019 H701.5 M695 1010 Q693.5 1013 695 1016 M703 1010 Q704.5 1013 703 1016 M693 1008.5 Q690 1013 693 1017.5 M705 1008.5 Q708 1013 705 1017.5"/>
<!-- info -->
<circle cx="748" cy="1016" r="7.5"/>
<path d="M748 1014.5 V1020 M748 1011.5 V1012"/>
<!-- tools -->
<path d="M937 1009 L951 1023 M936.5 1023 L943 1016.5 M946 1013.5 L948.5 1011 Q951.5 1011.5 952 1009 L949.5 1011.5 L947.5 1009.5 L950 1007 Q946.5 1007 946.5 1010.5 L945 1012 M937 1009 L939.5 1008.5 L941 1010 L940 1012 L938 1011 Z"/>
<!-- gear build -->
<circle cx="1087.2" cy="1016" r="2.2"/>
<path d="M1085.55 1010.65 L1085.69 1008.55 L1088.71 1008.55 L1088.85 1010.65 L1089.81 1011.05 L1091.40 1009.67 L1093.53 1011.80 L1092.15 1013.39 L1092.55 1014.35 L1094.65 1014.49 L1094.65 1017.51 L1092.55 1017.65 L1092.15 1018.61 L1093.53 1020.20 L1091.40 1022.33 L1089.81 1020.95 L1088.85 1021.35 L1088.71 1023.45 L1085.69 1023.45 L1085.55 1021.35 L1084.59 1020.95 L1083.00 1022.33 L1080.87 1020.20 L1082.25 1018.61 L1081.85 1017.65 L1079.75 1017.51 L1079.75 1014.49 L1081.85 1014.35 L1082.25 1013.39 L1080.87 1011.80 L1083.00 1009.67 L1084.59 1011.05 Z"/>
<!-- bug -->
<path d="M1202 1012.5 Q1202 1009 1206 1009 Q1210 1009 1210 1012.5 V1018 Q1210 1023 1206 1023 Q1202 1023 1202 1018 Z M1202 1013 H1210 M1198.5 1011 L1202 1013 M1213.5 1011 L1210 1013 M1198.5 1016.5 H1202 M1210 1016.5 H1213.5 M1199 1022.5 L1202.5 1020 M1213 1022.5 L1209.5 1020 M1206 1013 V1023"/>
<!-- play -->
<path d="M1238 1009 L1249 1016 L1238 1023 Z"/>
<!-- flask -->
<path d="M1278 1008.5 H1284 M1279 1008.5 V1014 L1274.5 1023 H1287.5 L1283 1014 V1008.5"/>
<!-- refresh -->
<path d="M1388.5 1012 Q1391 1015 1390 1018.5 Q1388 1022.5 1384 1022.5 Q1379 1022.5 1378.5 1017 Q1378.5 1012 1383 1011 M1380.5 1009 L1383.5 1011 L1381 1013.5"/>
<!-- bell -->
<path d="M1894 1020 H1906 L1904 1017 V1014 Q1904 1010 1900 1010 Q1896 1010 1896 1014 V1017 Z M1898.5 1022 H1901.5"/>
</g>
</svg>
<div id="taskbar" class="abs"></div>
<!-- windows logo -->
<svg class="abs" style="left:19px;top:1044px" width="22" height="22" viewBox="0 0 22 22"><path d="M0 3 L9 1.8 V10.2 H0 Z M10 1.6 L21.5 0 V10.2 H10 Z M0 11.2 H9 V19.6 L0 18.4 Z M10 11.2 H21.5 V21.5 L10 19.8 Z" fill="#ffffff"/></svg>
<!-- search box -->
<div class="abs" style="left:60px;top:1031px;width:360px;height:49px;background:#f0f0f0"></div>
<svg class="abs" style="left:74px;top:1044px" width="23" height="22" viewBox="0 0 23 22"><circle cx="13.5" cy="8.5" r="7" stroke="#1a1a1a" stroke-width="1.6" fill="none"/><path d="M8.5 13.5 L1.5 20.5" stroke="#1a1a1a" stroke-width="1.8"/></svg>
<div class="abs" style="left:110px;top:1043.5px;font-size:21px;color:#2b2b2b;transform:scaleX(0.94);transform-origin:0 0">Поиск</div>
<!-- illustration -->
<svg class="abs" style="left:320px;top:1031px" width="100" height="49" viewBox="0 0 100 49">
<path d="M2 47 L14 36 H56 L58 31.5 H100 V49 H2 Z" fill="#e6c391"/>
<path d="M6 10 L9 5 L12 10 L17 12 L12 14 L9 19 L6 14 L1 12 Z" fill="#c86ad8" transform="translate(6 2) scale(0.75)"/>
<path d="M18 22 L34 17 L50 20 L52 40 L35 44 L20 41 Z" fill="#4caf62"/>
<path d="M20 21 L34 16.5 L34 41 L21 39 Z" fill="#f4f4ef"/>
<path d="M34 16.5 L49 19.5 L50 38 L34 41 Z" fill="#e8e8e0"/>
<path d="M23 25 L31 23 M23 29 L31 27 M23 33 L31 31 M37 23 L46 25 M37 27 L46 29" stroke="#b0b0b0" stroke-width="0.8"/>
<path d="M42 25 L55 12 L58 15 L45 28 L41 29 Z" fill="#f2b84b"/>
<path d="M55 12 L57 10 L60 13 L58 15 Z" fill="#e86a5a"/>
<circle cx="56" cy="26" r="2.2" fill="#5bc8e0"/>
<path d="M62 20 Q62 7 76 7 Q90 7 90 20 V38 Q90 44 84 44 H68 Q62 44 62 38 Z" fill="#1a84f2"/>
<path d="M71 8 Q71 3.5 76 3.5 Q81 3.5 81 8" stroke="#1f5fb8" stroke-width="1.8" fill="none"/>
<path d="M65 33 Q66 25 76 25 Q86 25 87 33 V39 Q87 42 83 42 H69 Q65 42 65 39 Z" fill="#2a9bf8"/>
<path d="M66 38 H86 V40 Q86 42 82 42 H70 Q66 42 66 40 Z" fill="#9a7af0"/>
<circle cx="93" cy="12" r="2.3" fill="#f3b524"/>
</svg>
<!-- task view -->
<svg class="abs" style="left:439px;top:1044px" width="23" height="21" viewBox="0 0 23 21"><path d="M1 1 H15 M1 20 H15 M3 4.5 H13 V16.5 H3 Z M20.5 1 V3 M20.5 5.5 V15.5 M20.5 18 V20" stroke="#ffffff" stroke-width="1.3" fill="none"/></svg>
<!-- explorer -->
<svg class="abs" style="left:499px;top:1042px" width="30" height="25" viewBox="0 0 30 25"><path d="M0.5 2 Q0.5 0.5 2 0.5 H10 L12.5 3 H27.5 Q29 3 29 4.5 V8 H0.5 Z" fill="#e8a935"/><path d="M0.5 6 H29 V22 Q29 23.5 27.5 23.5 H2 Q0.5 23.5 0.5 22 Z" fill="#fcd05a"/><path d="M8.5 24 V15 H21 V24 H18 V18 H11.5 V24 Z" fill="#2f8fd8"/></svg>
<!-- word -->
<svg class="abs" style="left:561px;top:1042px" width="29" height="25" viewBox="0 0 29 25"><rect x="9" y="1" width="19" height="23" fill="#ffffff"/><path d="M15 5 H26 M15 8.5 H26 M15 12 H26 M15 15.5 H26 M15 19 H26" stroke="#2b579a" stroke-width="1.6"/><path d="M0.5 3 L16 0.5 V24.5 L0.5 22 Z" fill="#2b579a"/><text x="8" y="17" text-anchor="middle" font-family="Liberation Sans" font-size="11" font-weight="bold" fill="#ffffff">W</text></svg>
<!-- chrome -->
<svg class="abs" style="left:622px;top:1040px" width="32" height="30" viewBox="0 0 32 32">
<circle cx="16" cy="16" r="15.5" fill="#db4437"/>
<path d="M16 16 L2.6 8.3 A15.5 15.5 0 0 0 16 31.5 Z" fill="#0f9d58"/>
<path d="M16 16 L29.4 8.3 A15.5 15.5 0 0 1 16 31.5 Z" fill="#ffcd40"/>
<path d="M16 16 L16 31.5 L9 19 Z" fill="#0f9d58"/>
<circle cx="16" cy="16" r="7" fill="#ffffff"/><circle cx="16" cy="16" r="5.5" fill="#4285f4"/>
</svg>
<div class="abs" style="left:613px;top:1077px;width:52px;height:3px;background:#76b9ed"></div>
<!-- sublime -->
<div class="abs" style="left:685px;top:1040px;width:30px;height:29.5px;background:#464646;border-radius:3px 3px 6px 6px"></div>
<svg class="abs" style="left:680px;top:1035px" width="40" height="40" viewBox="680 1035 40 40"><path d="M691.9 1048.3 L707.4 1044.6 V1051.3 L702.2 1052.4 L707.4 1054.3 V1059.4 L691.9 1063.9 V1058 L697.4 1056.9 L691.9 1055.7 Z" fill="#f7a10c"/></svg>
<!-- vscode active -->
<div class="abs" style="left:732px;top:1030px;width:61px;height:50px;background:#424242"></div>
<div class="abs" style="left:732px;top:1077px;width:61px;height:3px;background:#76b9ed"></div>
<svg class="abs" style="left:746px;top:1040px" width="32.5" height="30" viewBox="0 0 100 100"><path d="M96.46 10.8 L75.86 0.87 C73.48 -0.28 70.63 0.2 68.76 2.07 L29.35 38.04 L12.19 25.01 C10.59 23.8 8.36 23.9 6.88 25.25 L1.37 30.26 C-0.45 31.92 -0.45 34.78 1.36 36.43 L16.25 50 L1.36 63.58 C-0.45 65.23 -0.45 68.09 1.37 69.75 L6.88 74.76 C8.36 76.1 10.59 76.2 12.19 74.99 L29.35 61.96 L68.76 97.93 C70.63 99.8 73.48 100.28 75.86 99.13 L96.46 89.21 C98.62 88.17 100 85.98 100 83.58 V16.42 C100 14.02 98.62 11.83 96.46 10.8 Z M75.01 72.7 L45.1 50 L75.01 27.3 Z" fill="#1c8ad9" fill-rule="evenodd"/><path d="M96.46 10.8 L75.86 0.87 C73.48 -0.28 70.63 0.2 68.76 2.07 L75.01 27.3 V72.7 L68.76 97.93 C70.63 99.8 73.48 100.28 75.86 99.13 L96.46 89.21 C98.62 88.17 100 85.98 100 83.58 V16.42 C100 14.02 98.62 11.83 96.46 10.8 Z" fill="#26a2f2"/><path d="M29.35 38.04 L45.1 50 L29.35 61.96 L16.25 50 Z" fill="#0f6cb8"/></svg>
<!-- tray -->
<svg class="abs" style="left:1579px;top:1049px" width="19" height="12" viewBox="0 0 19 12"><path d="M1.5 10.5 L9.5 2 L17.5 10.5" stroke="#ffffff" stroke-width="1.4" fill="none"/></svg>
<svg class="abs" style="left:1610px;top:1048px" width="19" height="15" viewBox="0 0 19 15"><path d="M1 8 Q9 1 17 1 M4.5 10.5 Q10.5 5 17 5 M8 13 Q12 9 17 9" stroke="#cfcfcf" stroke-width="1.2" fill="none"/><circle cx="15.5" cy="13.2" r="1.6" fill="#ffffff"/></svg>
<div class="abs" style="left:1640px;top:1045px;width:16px;height:21px;border-radius:8px;background:#0a78d8"></div>
<svg class="abs" style="left:1643px;top:1048px" width="10" height="15" viewBox="0 0 10 15"><path d="M2 4.5 L8 10 L5 12.8 V2.2 L8 5 L2 10.5" stroke="#ffffff" stroke-width="1.2" fill="none"/></svg>
<svg class="abs" style="left:1668px;top:1050px" width="21" height="12" viewBox="0 0 21 12"><rect x="1" y="1" width="17" height="10" stroke="#ffffff" stroke-width="1.3" fill="none"/><rect x="3" y="3" width="8" height="6" fill="#ffffff"/><rect x="18.5" y="4" width="2" height="4" fill="#ffffff"/></svg>
<svg class="abs" style="left:1697px;top:1047px" width="23" height="18" viewBox="0 0 23 18"><path d="M1 6 H5 L10 1.5 V16.5 L5 12 H1 Z" stroke="#ffffff" stroke-width="1.2" fill="none"/><path d="M13 6 Q14.5 9 13 12 M15.5 4 Q18.5 9 15.5 14 M18 2 Q22.5 9 18 16" stroke="#d0d0d0" stroke-width="1.1" fill="none"/></svg>
<div class="abs" style="left:1732px;top:1045.5px;font-size:15.5px;color:#ffffff;transform:scaleX(0.9);transform-origin:0 0">ENG</div>
<div class="abs" style="left:1793px;top:1034.5px;font-size:15.5px;color:#ffffff;transform:scaleX(0.93);transform-origin:0 0">23:09</div>
<div class="abs" style="left:1777px;top:1056.5px;font-size:15.5px;color:#ffffff;transform:scaleX(0.9);transform-origin:0 0">10.09.2023</div>
<svg class="abs" style="left:1866px;top:1043px" width="36" height="34" viewBox="0 0 36 34"><path d="M3 2 H25 V17 H13 L8 22 V17 H3 Z" fill="#ffffff"/><path d="M7 6 H21 M7 9.5 H21 M7 13 H17" stroke="#2a2a2a" stroke-width="1.3"/><circle cx="22" cy="22" r="8.5" fill="#2a2a2a" stroke="#9a9a9a" stroke-width="1.2"/><text x="22" y="27" text-anchor="middle" font-family="Liberation Sans" font-size="13" fill="#ffffff">2</text></svg>
<div class="abs" style="left:1914px;top:1030px;width:1px;height:50px;background:#5a5a5a"></div>

<!-- watermark -->
<svg class="abs" style="left:1414px;top:986px" width="70" height="68" viewBox="0 0 70 68">
<defs>
<radialGradient id="gl" cx="0.45" cy="0.3" r="0.75"><stop offset="0" stop-color="#3cc8ff"/><stop offset="0.55" stop-color="#1560d8"/><stop offset="1" stop-color="#0a3aa8"/></radialGradient>
<clipPath id="glc"><circle cx="34.7" cy="34" r="30.5"/></clipPath>
</defs>
<circle cx="34.7" cy="34" r="31.1" fill="url(#gl)"/>
<g clip-path="url(#glc)">
<path d="M2 30 Q6 10 24 5 Q22 16 18 24 Q12 30 6 33 Z" fill="#0fc018"/>
<path d="M22 6 Q34 2 44 6 Q40 14 32 20 Q26 24 20 26 Q20 14 22 6 Z" fill="#9be86a"/>
<path d="M28 8 Q36 6 40 10 Q34 16 28 14 Z" fill="#f0f890"/>
<path d="M30 20 Q40 14 50 12 L44 22 Q36 24 30 24 Z" fill="#40e0f8"/>
<path d="M58 18 Q68 24 66 40 Q60 44 56 40 Q54 30 58 18 Z" fill="#12d22a"/>
<path d="M24 46 Q34 50 44 52 Q50 58 46 66 Q34 68 28 60 Q24 54 24 46 Z" fill="#0cba1a"/>
</g>
<circle cx="34.7" cy="34" r="30.6" fill="none" stroke="#1aa0f0" stroke-width="1.2"/>
<path d="M6.9 34.4 L55.8 15.7 L47.4 56.5 L27 43.9 L25.6 53.7 L21 38.9 Z" fill="#f2f6fb"/>
<path d="M21 38.9 L51 22 L27 43.9 L25.6 53.7 Z" fill="#dfe6ef"/>
<path d="M25.6 53.7 L27 43.9 L21 38.9 Z" fill="#b9cadb"/>
</svg>
<svg class="abs" id="wmtext" style="left:1480px;top:980px" width="440" height="70" viewBox="0 0 440 70"><text x="13" y="53.5" font-family="Liberation Sans" font-size="51" letter-spacing="4.6" fill="#000" stroke="#000" stroke-width="7" stroke-linejoin="round">telegrammy.net</text><text x="13" y="53.5" font-family="Liberation Sans" font-size="51" letter-spacing="4.6" fill="#fff" stroke="#fff" stroke-width="1.4" stroke-linejoin="round">telegrammy.net</text></svg>
</body></html>
